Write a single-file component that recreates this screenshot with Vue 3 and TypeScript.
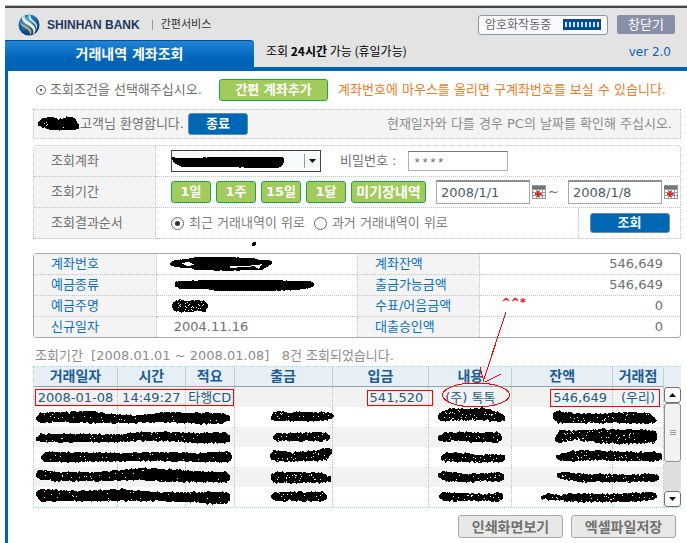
<script setup lang="ts">
import { ref } from 'vue'

type Edge = [number, number, number]

interface Stroke {
  edges: Edge[]
  rough: number
  specks: number
}

interface Row {
  cells: string[]
}

const account = ref('')
const password = ref('****')
const dateFrom = ref('2008/1/1')
const dateTo = ref('2008/1/8')
const order = ref('recent')

const periods = ['1일', '1주', '15일', '1달']

const summary = [
  ['계좌번호', '', '계좌잔액', '546,649'],
  ['예금종류', '', '출금가능금액', '546,649'],
  ['예금주명', '', '수표/어음금액', '0'],
  ['신규일자', '2004.11.16', '대출승인액', '0'],
]

const columns = ['거래일자', '시간', '적요', '출금', '입금', '내용', '잔액', '거래점']
const colWidths = [84, 68, 49, 98, 97, 83, 101, 51]
const colTotal = colWidths.reduce((a, b) => a + b, 0)

const blank: Row = { cells: ['', '', '', '', '', '', '', ''] }
const rows: Row[] = [
  { cells: ['2008-01-08', '14:49:27', '타행CD', '', '541,520', '(주) 톡톡', '546,649', '(우리)'] },
  blank, blank, blank, blank, blank,
]

// Each stroke lists [x, top, bottom] stations of a black marker line.
const strokes: Stroke[] = [
  { edges: [[38, 123, 125], [42, 119, 127], [50, 117, 130], [58, 119, 130], [68, 117, 130], [75, 118, 130], [79, 125, 128]], rough: 1, specks: 5 },
  { edges: [[172, 157, 160], [176, 158, 164], [182, 158, 167], [230, 157, 167], [255, 157, 168], [278, 157, 168], [282, 157, 166], [284, 159, 162]], rough: 0.3, specks: 0 },
  { edges: [[170, 263, 265], [175, 260, 267], [188, 259, 268], [198, 257, 270], [230, 257, 271], [250, 258, 270], [262, 260, 270], [268, 260, 266], [272, 261, 264]], rough: 0.5, specks: 0 },
  { edges: [[175, 282, 286], [180, 281, 289], [205, 280, 289], [220, 280, 291], [270, 280, 291], [296, 281, 290], [310, 281, 288], [314, 283, 286]], rough: 0.4, specks: 0 },
  { edges: [[172, 305, 308], [174, 301, 311], [180, 299, 312], [188, 301, 312], [198, 300, 311], [205, 301, 312], [208, 305, 308]], rough: 1.1, specks: 28 },
  { edges: [[36, 417, 419], [40, 413, 423], [60, 412, 422], [90, 411, 423], [110, 414, 423], [135, 415, 423], [165, 412, 422], [200, 413, 424], [222, 413, 424], [230, 416, 421]], rough: 1.1, specks: 24 },
  { edges: [[36, 437, 440], [40, 434, 442], [80, 434, 442], [120, 434, 442], [140, 432, 441], [170, 432, 441], [200, 433, 443], [226, 432, 443], [230, 435, 441]], rough: 1.1, specks: 24 },
  { edges: [[41, 456, 459], [45, 452, 462], [80, 452, 462], [120, 453, 461], [160, 452, 461], [200, 453, 462], [228, 451, 462], [232, 455, 459]], rough: 1, specks: 18 },
  { edges: [[36, 473, 477], [40, 469, 480], [60, 472, 481], [100, 472, 481], [140, 468, 480], [170, 469, 482], [195, 471, 482], [227, 472, 483], [230, 475, 479]], rough: 1.1, specks: 26 },
  { edges: [[36, 493, 496], [40, 489, 501], [80, 491, 501], [120, 489, 501], [160, 492, 501], [195, 492, 502], [208, 492, 504], [226, 492, 504], [230, 495, 501]], rough: 1.1, specks: 22 },
  { edges: [[271, 416, 419], [274, 412, 421], [300, 412, 421], [325, 412, 421], [334, 414, 418]], rough: 1.1, specks: 14 },
  { edges: [[273, 436, 439], [277, 433, 441], [300, 433, 441], [325, 432, 441], [330, 435, 439]], rough: 1.1, specks: 12 },
  { edges: [[270, 454, 458], [274, 450, 461], [290, 452, 461], [312, 451, 461], [326, 448, 460], [332, 449, 454]], rough: 1.3, specks: 20 },
  { edges: [[271, 474, 480], [275, 472, 483], [300, 472, 483], [322, 473, 483], [331, 477, 481]], rough: 1.3, specks: 26 },
  { edges: [[271, 495, 497], [275, 492, 501], [300, 492, 501], [323, 492, 501], [327, 495, 499]], rough: 1, specks: 12 },
  { edges: [[438, 416, 419], [442, 411, 421], [452, 408, 421], [470, 409, 420], [486, 408, 420], [500, 413, 422], [505, 416, 420]], rough: 1.2, specks: 34 },
  { edges: [[438, 436, 440], [444, 433, 442], [460, 432, 441], [480, 433, 442], [498, 432, 443], [502, 436, 440]], rough: 1.2, specks: 14 },
  { edges: [[441, 456, 460], [446, 453, 462], [465, 453, 462], [480, 455, 462], [500, 454, 462], [505, 456, 460]], rough: 1.2, specks: 16 },
  { edges: [[438, 473, 477], [444, 471, 481], [465, 474, 482], [485, 473, 481], [500, 472, 482], [504, 475, 479]], rough: 1.1, specks: 12 },
  { edges: [[439, 495, 498], [444, 492, 501], [465, 493, 501], [485, 494, 501], [499, 492, 502], [503, 495, 499]], rough: 1.1, specks: 18 },
  { edges: [[553, 413, 417], [557, 411, 423], [570, 413, 423], [600, 414, 423], [625, 412, 423], [650, 413, 424], [657, 420, 422]], rough: 1.1, specks: 28 },
  { edges: [[555, 438, 441], [560, 430, 443], [575, 431, 440], [600, 429, 443], [630, 430, 444], [655, 430, 443], [657, 434, 439]], rough: 1.4, specks: 50 },
  { edges: [[556, 456, 459], [562, 453, 461], [580, 450, 461], [600, 451, 460], [630, 452, 461], [657, 452, 461], [662, 454, 459]], rough: 1.2, specks: 24 },
  { edges: [[557, 473, 477], [562, 472, 479], [580, 474, 482], [610, 474, 482], [630, 475, 482], [652, 473, 482], [659, 476, 480]], rough: 1.1, specks: 20 },
  { edges: [[541, 496, 499], [548, 494, 500], [560, 495, 501], [575, 493, 502], [600, 494, 502], [630, 493, 502], [653, 492, 500], [657, 495, 498]], rough: 1.2, specks: 24 },
]

function noise(n: number): number {
  const v = Math.sin(n * 12.9898) * 43758.5453
  return v - Math.floor(v)
}

function at(edges: Edge[], x: number): [number, number] {
  for (let i = 1; i < edges.length; i++) {
    const a = edges[i - 1]
    const b = edges[i]
    if (x <= b[0]) {
      const t = (x - a[0]) / (b[0] - a[0])
      return [a[1] + (b[1] - a[1]) * t, a[2] + (b[2] - a[2]) * t]
    }
  }
  const last = edges[edges.length - 1]
  return [last[1], last[2]]
}

function outline(s: Stroke, seed: number): string {
  const top: string[] = []
  const bottom: string[] = []
  const start = s.edges[0][0]
  const end = s.edges[s.edges.length - 1][0]
  for (let x = start; x <= end; x += 1) {
    const [t, b] = at(s.edges, x)
    const dt = (noise(x + seed * 31) - 0.5) * 2 * s.rough
    const db = (noise(x * 3 + seed * 17) - 0.5) * 2 * s.rough
    top.push(`${x} ${(t + dt).toFixed(1)}`)
    bottom.unshift(`${x} ${(b + db).toFixed(1)}`)
  }
  return `M${top.join('L')}L${bottom.join('L')}Z`
}

function specks(s: Stroke, seed: number): string {
  const start = s.edges[0][0] + 4
  const end = s.edges[s.edges.length - 1][0] - 4
  let d = ''
  for (let i = 0; i < s.specks; i++) {
    const x = Math.round(start + noise(seed * 7 + i * 1.7) * (end - start))
    const [t, b] = at(s.edges, x)
    const y = Math.round(t + 1 + noise(seed * 3 + i * 5.3) * (b - t - 2))
    d += `M${x} ${y}h1v1h-1z`
  }
  return d
}

const marks = strokes.map((s, i) => ({ body: outline(s, i + 1), holes: specks(s, i + 1) }))
</script>

<template>
  <div class="page">
    <header class="top">
      <div class="brand-row">
        <svg class="logo" viewBox="0 0 22 22" aria-hidden="true">
          <defs>
            <radialGradient id="globe" cx="0.4" cy="0.3" r="0.75">
              <stop offset="0" stop-color="#5fb4ea" />
              <stop offset="0.5" stop-color="#1769b4" />
              <stop offset="1" stop-color="#0a2a66" />
            </radialGradient>
          </defs>
          <circle cx="11" cy="11" r="10.5" fill="url(#globe)" />
          <path d="M4 3.500C4 8 8 9.500 11.500 12s5 5 3 9c4-3 4-7 0-10.500S6.500 7 6.500 1.800z" fill="#f4edc6" />
          <path d="M1.500 7c1 5 4.500 6 7.500 8s3.500 4 2.500 6.500c2.500-2 2.500-5-.5-7.500S3.500 11 1.500 7z" fill="#d2b45c" />
          <path d="M10.500 1c-.5 4 2 5.500 4.500 7.500s3.500 4 3 7c2-3 1-5.500-1-7.500S12 4.500 12.500 1.200z" fill="#e2e6cf" />
        </svg>
        <strong class="brand">SHINHAN BANK</strong>
        <span class="bar"></span>
        <span class="service">간편서비스</span>
        <div class="secure">
          <span>암호화작동중</span>
          <span class="meter"><i v-for="n in 9" :key="n"></i></span>
        </div>
        <button type="button" class="close">창닫기</button>
      </div>
      <div class="tab-row">
        <a href="#" class="tab">거래내역 계좌조회</a>
        <p class="hours">조회 <b>24시간</b> 가능 (휴일가능)</p>
        <span class="version">ver 2.0</span>
      </div>
    </header>

    <main class="content">
      <div class="intro">
        <svg class="target" viewBox="0 0 10 10" aria-hidden="true">
          <circle cx="5" cy="5" r="4.500" fill="none" stroke="#666" />
          <circle cx="5" cy="5" r="1.200" fill="#555" />
        </svg>
        <span class="guide">조회조건을 선택해주십시오.</span>
        <button type="button" class="green add">간편 계좌추가</button>
        <span class="hint">계좌번호에 마우스를 올리면 구계좌번호를 보실 수 있습니다.</span>
      </div>

      <div class="welcome">
        <span>고객님 환영합니다.</span>
        <button type="button" class="blue exit">종료</button>
        <span class="notice">현재일자와 다를 경우 PC의 날짜를 확인해 주십시오.</span>
      </div>

      <form class="query" @submit.prevent>
        <label class="name" for="account">조회계좌</label>
        <div class="field">
          <span class="picker">
            <select id="account" v-model="account"><option value=""></option></select>
            <svg viewBox="0 0 18 18" aria-hidden="true">
              <path d="M1.500 2v14" stroke="#999" />
              <path d="M6 7h7l-3.500 4z" fill="#111" />
            </svg>
          </span>
          <label class="pw-label" for="password">비밀번호 :</label>
          <input id="password" v-model="password" class="pw" type="text" />
        </div>

        <span class="name">조회기간</span>
        <div class="field tight">
          <button v-for="p in periods" :key="p" type="button" class="green day">{{ p }}</button>
          <button type="button" class="green unposted">미기장내역</button>
          <input v-model="dateFrom" class="date" type="text" aria-label="시작일" />
          <button type="button" class="cal" aria-label="시작일 선택">
            <svg viewBox="0 0 14 14" aria-hidden="true">
              <rect width="14" height="14" fill="#999" />
              <rect y="1" width="13" height="3" fill="#6d7780" />
              <path d="M1 5h3v2H1zM5 5h2v2H5zM8 5h2v2H8zM11 5h2v2h-2zM1 8h3v2H1zM11 8h2v2h-2zM1 11h3v2H1zM5 11h2v2H5zM8 11h2v2H8zM11 11h2v2h-2z" fill="#fff" />
              <path d="M3 8h6v2H3zM5 6h2v6H5z" fill="#f02020" />
            </svg>
          </button>
          <span class="tilde">~</span>
          <input v-model="dateTo" class="date" type="text" aria-label="종료일" />
          <button type="button" class="cal" aria-label="종료일 선택">
            <svg viewBox="0 0 14 14" aria-hidden="true">
              <rect width="14" height="14" fill="#999" />
              <rect y="1" width="13" height="3" fill="#6d7780" />
              <path d="M1 5h3v2H1zM5 5h2v2H5zM8 5h2v2H8zM11 5h2v2h-2zM1 8h3v2H1zM11 8h2v2h-2zM1 11h3v2H1zM5 11h2v2H5zM8 11h2v2H8zM11 11h2v2h-2z" fill="#fff" />
              <path d="M3 8h6v2H3zM5 6h2v6H5z" fill="#f02020" />
            </svg>
          </button>
        </div>

        <span class="name">조회결과순서</span>
        <div class="field">
          <label class="choice"><input v-model="order" type="radio" name="order" value="recent" />최근 거래내역이 위로</label>
          <label class="choice"><input v-model="order" type="radio" name="order" value="past" />과거 거래내역이 위로</label>
          <div class="submit"><button type="submit" class="blue search">조회</button></div>
        </div>
      </form>

      <table class="summary">
        <colgroup><col class="c1" /><col class="c2" /><col class="c1" /><col class="c2" /></colgroup>
        <tbody>
          <tr v-for="s in summary" :key="s[0]">
            <th scope="row">{{ s[0] }}</th>
            <td>{{ s[1] }}</td>
            <th scope="row">{{ s[2] }}</th>
            <td class="num">{{ s[3] }}</td>
          </tr>
        </tbody>
      </table>

      <p class="result">조회기간&nbsp; [2008.01.01 ~ 2008.01.08]&nbsp;&nbsp; 8건 조회되었습니다.</p>

      <div class="ledger">
        <table class="history">
          <colgroup>
            <col v-for="(w, i) in colWidths" :key="i" :style="{ width: (w / colTotal) * 100 + '%' }" />
          </colgroup>
          <thead>
            <tr><th v-for="c in columns" :key="c" scope="col">{{ c }}</th></tr>
          </thead>
          <tbody>
            <tr v-for="(r, i) in rows" :key="i">
              <td v-for="(c, j) in r.cells" :key="j" :class="{ num: j === 3 || j === 4 || j === 6 }">{{ c }}</td>
            </tr>
          </tbody>
        </table>
        <div class="scroll">
          <span class="cap"></span>
          <button type="button" class="arrow" aria-label="위로">
            <svg viewBox="0 0 7 4" aria-hidden="true"><path d="M3.500 0L7 4H0z" fill="#111" /></svg>
          </button>
          <span class="thumb"><i></i><i></i><i></i></span>
          <span class="track"></span>
          <button type="button" class="arrow" aria-label="아래로">
            <svg viewBox="0 0 7 4" aria-hidden="true"><path d="M0 0h7L3.500 4z" fill="#111" /></svg>
          </button>
        </div>
      </div>

      <div class="actions">
        <button type="button" class="grey">인쇄화면보기</button>
        <button type="button" class="grey">엑셀파일저장</button>
      </div>
    </main>

    <svg class="ink" viewBox="0 0 687 543" preserveAspectRatio="none" aria-hidden="true">
      <g v-for="(m, i) in marks" :key="i">
        <path :d="m.body" fill="#000" />
        <path :d="m.holes" fill="#fff" />
      </g>
      <path d="M181 263l8-1 6 3-8 1zM230 266l14 0 14-1 0 1-14 1-14 1zM254 266l8-2-3 5z" fill="#fff" />
      <circle cx="254" cy="244" r="2" fill="#000" />
      <g fill="none" stroke="#f00">
        <rect x="35.500" y="389.500" width="198" height="16" />
        <rect x="367.500" y="390.500" width="65" height="15" />
        <rect x="550.500" y="389.500" width="109" height="17" />
        <ellipse cx="476" cy="395" rx="33.500" ry="12" />
        <path d="M506 312L483 382M480 367l4 15M485 382l16-8" />
      </g>
    </svg>
    <span class="doodle">^^*</span>
  </div>
</template>

<style>
body {
  margin: 0;
  background: #fff;
}
</style>

<style scoped>
.page {
  position: relative;
  display: flex;
  flex-direction: column;
  box-sizing: border-box;
  min-height: 100vh;
  padding: 5px 0 0 5px;
  overflow: hidden;
  color: #707070;
  font: 13px/20px "DejaVu Sans", "Noto Sans CJK KR", sans-serif;
  white-space: nowrap;
}
button,
input,
select {
  box-sizing: border-box;
  margin: 0;
  padding: 0;
  font: inherit;
  color: inherit;
}
p {
  margin: 0;
}

.top {
  border-top: 1px solid #c4c4b8;
  border-bottom: 4px solid #0064b6;
  background: #e3e3e3;
  box-shadow: inset 0 2px #3c464c;
}
.brand-row {
  display: flex;
  align-items: center;
  height: 34px;
  padding: 3px 12px 0 13px;
  box-sizing: border-box;
}
.logo {
  width: 22px;
  height: 22px;
}
.brand {
  margin-left: 7px;
  color: #1c3a5e;
  font: bold 12px/20px "Liberation Sans", sans-serif;
}
.bar {
  width: 1px;
  height: 10px;
  margin: 0 8px 0 12px;
  background: #999;
}
.service {
  color: #333;
  font-size: 11px;
}
.secure {
  display: flex;
  align-items: center;
  justify-content: space-between;
  box-sizing: border-box;
  width: 130px;
  height: 20px;
  margin-left: auto;
  padding: 0 6px;
  border: 1px solid #8797a8;
  border-radius: 3px;
  background: #fafafa;
  color: #5c6670;
  font-size: 12px;
}
.meter {
  display: flex;
  align-items: center;
  justify-content: center;
  gap: 2px;
  width: 38px;
  height: 11px;
  background: #084a8c;
}
.meter i {
  width: 2px;
  height: 5px;
  background: #b8e8f8;
}
.close {
  width: 58px;
  height: 19px;
  margin-left: 9px;
  border: 0;
  border-radius: 2px;
  background: #8890a8;
  color: #fff;
  line-height: 18px;
}
.tab-row {
  display: flex;
  height: 27px;
  padding-right: 16px;
}
.tab {
  box-sizing: border-box;
  width: 249px;
  height: 31px;
  margin-bottom: -4px;
  border-radius: 0 4px 0 0;
  background: linear-gradient(#2286dc, #0064b6 60%);
  box-shadow: inset 0 1px #0a4c8c;
  color: #fff;
  font-size: 14px;
  font-weight: bold;
  line-height: 29px;
  text-align: center;
  text-decoration: none;
}
.hours {
  margin-left: 12px;
  color: #000;
  font: 12px/22px "Noto Sans CJK KR", sans-serif;
}
.version {
  margin-left: auto;
  color: #0a64b4;
  font-size: 12px;
  line-height: 25px;
}

.content {
  flex: 1;
  padding: 0 6px 4px 25px;
  border-left: 3px solid #0064b6;
}
.intro {
  display: flex;
  align-items: center;
  height: 38px;
  padding: 0 15px 0 3px;
}
.target {
  width: 10px;
  height: 10px;
  margin-right: 4px;
}
.green {
  height: 22px;
  border: 1px solid #18a848;
  border-radius: 3px;
  background: #a3cb5c;
  color: #fff;
  font-weight: bold;
  line-height: 20px;
}
.add {
  width: 109px;
  margin-left: auto;
}
.hint {
  margin-left: 10px;
  color: #ee7c22;
}
.blue {
  border: 1px solid #5f8fb4;
  border-radius: 3px;
  background: #0067b5;
  color: #fff;
  font-weight: bold;
  line-height: 18px;
}
.welcome {
  display: flex;
  align-items: center;
  box-sizing: border-box;
  height: 30px;
  padding: 0 8px 0 46px;
  border: 1px dotted #c4c4c4;
  background: #f4f4f4;
}
.exit {
  width: 60px;
  height: 22px;
  margin-left: 4px;
}
.notice {
  margin-left: auto;
  color: #8c8c8c;
}

.query {
  display: grid;
  grid-template-columns: 122px 1fr;
  grid-auto-rows: 31px;
  margin-top: 6px;
  border: 1px dotted #c4c4c4;
  border-bottom: 0;
  border-radius: 4px 4px 0 0;
}
.name {
  padding-left: 17px;
  border-right: 1px dotted #c4c4c4;
  border-bottom: 1px dotted #c4c4c4;
  background: #f4f4f4;
  line-height: 30px;
}
.field {
  display: flex;
  align-items: center;
  padding-left: 15px;
  border-bottom: 1px dotted #c4c4c4;
}
.picker {
  display: grid;
  width: 150px;
}
.picker select,
.picker svg {
  grid-area: 1 / 1;
}
.picker select {
  height: 22px;
  border: 1px solid #444;
  border-radius: 0;
  background: #f6fafa;
  appearance: none;
}
.picker svg {
  align-self: center;
  justify-self: end;
  width: 18px;
  height: 18px;
  pointer-events: none;
}
.pw-label {
  margin: 0 12px 0 19px;
}
.pw {
  width: 100px;
  height: 20px;
  padding: 5px 4px 0;
  border: 1px solid #b0b0b0;
  border-top-color: #777;
  font-family: "Liberation Mono", monospace;
}
.tight .green {
  margin-right: 5px;
}
.day {
  width: 40px;
}
.unposted {
  width: 75px;
  font-size: 14px;
}
.date {
  width: 94px;
  height: 24px;
  padding: 0 4px;
  border: 1px solid #a8a8a8;
  border-top: 2px solid #909090;
  color: #4c5c68;
}
.tight .date:first-of-type {
  margin-left: 5px;
}
.cal {
  width: 14px;
  height: 14px;
  margin-left: 2px;
  border: 0;
  background: none;
}
.cal svg {
  display: block;
}
.tilde {
  width: 22px;
  padding-left: 2px;
  box-sizing: border-box;
}
.choice {
  display: flex;
  align-items: center;
  margin-right: 9px;
  color: #7c7c7c;
}
.choice input {
  display: grid;
  place-items: center;
  width: 13px;
  height: 13px;
  margin-right: 5px;
  border: 1px solid #666;
  border-radius: 50%;
  background: #fff;
  appearance: none;
}
.choice input:checked::before {
  width: 5px;
  height: 5px;
  border-radius: 50%;
  background: #333;
  content: "";
}
.submit {
  display: flex;
  align-items: center;
  justify-content: center;
  align-self: stretch;
  width: 101px;
  margin-left: auto;
  border-left: 1px dotted #c4c4c4;
}
.search {
  width: 80px;
  height: 20px;
}

table {
  width: 100%;
  table-layout: fixed;
  border-collapse: separate;
  border-spacing: 0;
}
.summary {
  margin-top: 14px;
  border: 1px solid #a4aaaa;
  border-radius: 3px;
}
.c1 {
  width: 19%;
}
.c2 {
  width: 31%;
}
.summary th,
.summary td {
  height: 20px;
  padding: 0 17px;
  border-bottom: 1px dotted #c4c4c4;
  line-height: 20px;
  text-align: left;
}
.summary tr:last-child th,
.summary tr:last-child td {
  border-bottom: 0;
}
.summary th {
  border-right: 1px dotted #c4c4c4;
  background: #f4f4f4;
  color: #0a70c0;
  font-weight: normal;
}
.summary td + th {
  border-left: 1px dotted #c4c4c4;
}
.summary .num,
.history .num {
  text-align: right;
}
.result {
  padding: 8px 0 0 2px;
  color: #8c8c8c;
}

.ledger {
  display: flex;
  border: 1px dotted #98d8e4;
  border-width: 1px 0 1px 1px;
}
.history {
  flex: 1;
  width: 0;
}
.history th {
  height: 20px;
  padding: 0;
  border-right: 1px solid #c4ccd4;
  border-bottom: 1px solid #8ca4ac;
  background: #e6eef6;
  color: #1c5c94;
  font-size: 14px;
  line-height: 19px;
  box-sizing: border-box;
}
.history td {
  box-sizing: border-box;
  height: 20px;
  padding: 0;
  border-right: 1px dotted #b8c8cc;
  color: #245880;
  line-height: 19px;
  text-align: center;
}
.history .num {
  padding-right: 5px;
}
.history tr:nth-child(odd) td {
  background: #f2f2f2;
}
.scroll {
  display: flex;
  flex-direction: column;
  width: 17px;
}
.cap {
  height: 20px;
  background: #e6eef6;
}
.arrow {
  display: grid;
  place-items: center;
  height: 16px;
  border: 1px solid #707070;
  border-radius: 3px;
  background: #fff;
}
.arrow svg {
  width: 7px;
  height: 4px;
}
.thumb {
  display: flex;
  flex-direction: column;
  align-items: center;
  justify-content: center;
  gap: 1px;
  height: 57px;
  border: 1px solid #909090;
  border-radius: 3px;
  background: #f2f2f2;
}
.thumb i {
  width: 6px;
  height: 1px;
  background: #999;
}
.track {
  flex: 1;
  background: #dedede;
}

.actions {
  display: flex;
  justify-content: flex-end;
  gap: 8px;
  padding: 7px 5px 0 0;
}
.grey {
  width: 105px;
  height: 23px;
  border: 1px solid #a8a8a8;
  border-radius: 3px;
  background: #e8e8e8;
  color: #707070;
  font-size: 14px;
  font-weight: bold;
  line-height: 20px;
}

.ink {
  position: absolute;
  top: 0;
  left: 0;
  width: 100%;
  height: 543px;
  pointer-events: none;
  shape-rendering: crispEdges;
}
.doodle {
  position: absolute;
  top: 293px;
  left: 73%;
  color: #f00;
  font-weight: bold;
  font-size: 11px;
}
</style>
